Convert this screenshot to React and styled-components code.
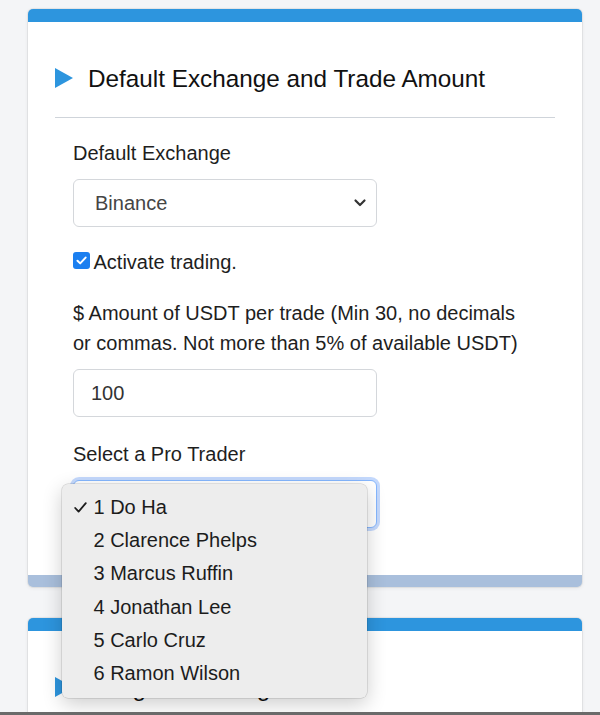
import React from 'react';
import styled, { createGlobalStyle } from 'styled-components';

const GlobalStyle = createGlobalStyle`
  html, body {
    margin: 0;
    padding: 0;
    background: #f4f5f7;
    font-family: "Liberation Sans", Arial, Helvetica, sans-serif;
    overflow: hidden;
  }
`;

const Page = styled.div`
  display: flex;
  flex-direction: column;
  height: 100vh;
`;

const Content = styled.main`
  flex: 1;
  overflow: hidden;
  padding: 9px 18px 0 28px;
  display: flex;
  flex-direction: column;
  gap: 31px;
`;

const WindowEdge = styled.div`
  height: 3px;
  background: #6a6a6a;
`;

const Card = styled.section`
  flex-shrink: 0;
  background: #ffffff;
  border-top: 13px solid #2d95de;
  border-bottom: ${props => (props.$footer ? '12.5px solid #a9bfdc' : 'none')};
  border-radius: 5px;
  box-shadow: 0 0 0 1px rgba(0, 0, 0, 0.05), 0 1px 4px rgba(0, 0, 0, 0.07);
`;

const CardBody = styled.div`
  padding: 42px 27px 47px;
`;

const Heading = styled.h2`
  display: flex;
  align-items: center;
  gap: 15px;
  margin: 0 0 23px;
  height: 30px;
  font-size: 24.3px;
  line-height: 30px;
  font-weight: 400;
  color: #111111;
`;

const Triangle = styled.span`
  width: 0;
  height: 0;
  margin-bottom: 3px;
  border-left: 18px solid #2d95de;
  border-top: 10px solid transparent;
  border-bottom: 10px solid transparent;
`;

const Divider = styled.div`
  border-top: 1px solid #cfd4da;
  margin-bottom: 20px;
`;

const Form = styled.div`
  padding: 0 18px;
`;

const Group = styled.div`
  margin-bottom: ${props => props.$gap ?? 20}px;
`;

const Label = styled.div`
  max-width: 465px;
  margin-bottom: 11px;
  font-size: 20px;
  line-height: 30px;
  color: #1e1e1e;
`;

const SelectWrap = styled.div`
  position: relative;
`;

const SelectBox = styled.div`
  box-sizing: border-box;
  width: 304px;
  height: 48px;
  display: flex;
  align-items: center;
  justify-content: space-between;
  padding: 0 6px 0 21px;
  background: #ffffff;
  border: 1px solid ${props => (props.$focused ? '#86b7fe' : '#d4d7db')};
  border-radius: 6px;
  box-shadow: ${props => (props.$focused ? '0 0 0 3px rgba(60, 130, 250, 0.3)' : 'none')};
  font-size: 20px;
  color: #454545;
`;

const TextInput = styled.input`
  box-sizing: border-box;
  display: block;
  width: 304px;
  height: 48px;
  padding: 0 0 0 17px;
  background: #ffffff;
  border: 1px solid #d4d7db;
  border-radius: 6px;
  font-family: inherit;
  font-size: 20px;
  color: #333333;
  outline: none;
`;

const CheckRow = styled.label`
  display: flex;
  align-items: center;
  gap: 4px;
  font-size: 20px;
  line-height: 30px;
  color: #1e1e1e;
`;

const CheckBox = styled.span`
  width: 16.5px;
  height: 16.5px;
  margin-bottom: 3px;
  display: flex;
  align-items: center;
  justify-content: center;
  background: #1b7ff0;
  border-radius: 3px;
`;

const Menu = styled.ul`
  position: absolute;
  top: 4px;
  left: -11.5px;
  z-index: 10;
  width: 305px;
  margin: 0;
  padding: 6.5px 0 8px;
  list-style: none;
  background: #ededed;
  border-radius: 6px;
  box-shadow: 0 0 0 0.5px rgba(0, 0, 0, 0.18), 0 6px 20px rgba(0, 0, 0, 0.2);
`;

const MenuItem = styled.li`
  display: flex;
  align-items: center;
  height: 33.3px;
  padding-left: 12.5px;
  font-size: 20px;
  color: #1c1c1c;
`;

const CheckSlot = styled.span`
  width: 19.5px;
  display: flex;
  align-items: center;
`;

const Chevron = () => (
  <svg width="20" height="12" viewBox="0 0 20 12">
    <path d="M5.5 3.5 L10 8 L14.5 3.5" fill="none" stroke="#333" strokeWidth="2.2" strokeLinecap="round" strokeLinejoin="round" />
  </svg>
);

const traders = ['1 Do Ha', '2 Clarence Phelps', '3 Marcus Ruffin', '4 Jonathan Lee', '5 Carlo Cruz', '6 Ramon Wilson'];

const App = () => {
  return (
    <>
      <GlobalStyle />
      <Page>
        <Content>
          <Card $footer>
            <CardBody>
              <Heading>
                <Triangle />
                Default Exchange and Trade Amount
              </Heading>
              <Divider />
              <Form>
                <Group>
                  <Label>Default Exchange</Label>
                  <SelectBox>
                    Binance
                    <Chevron />
                  </SelectBox>
                </Group>

                <Group $gap={21}>
                  <CheckRow>
                    <CheckBox>
                      <svg width="11" height="9" viewBox="0 0 11 9">
                        <path d="M1.5 4.8 L4.2 7.4 L9.6 1.6" fill="none" stroke="#fff" strokeWidth="2" strokeLinecap="round" strokeLinejoin="round" />
                      </svg>
                    </CheckBox>
                    Activate trading.
                  </CheckRow>
                </Group>

                <Group $gap={22}>
                  <Label>
                    $ Amount of USDT per trade (Min 30, no decimals or commas. Not more than 5% of available USDT)
                  </Label>
                  <TextInput readOnly value="100" />
                </Group>

                <Group $gap={0}>
                  <Label>Select a Pro Trader</Label>
                  <SelectWrap>
                    <SelectBox $focused>
                      1 Do Ha
                      <Chevron />
                    </SelectBox>
                    <Menu>
                      {traders.map((name, i) => (
                        <MenuItem key={name}>
                          <CheckSlot>
                            {i === 0 && (
                              <svg width="13" height="11" viewBox="0 0 13 11">
                                <path d="M1.2 6 L4.6 9.6 L11.8 1.2" fill="none" stroke="#1c1c1c" strokeWidth="1.8" strokeLinecap="round" strokeLinejoin="round" />
                              </svg>
                            )}
                          </CheckSlot>
                          {name}
                        </MenuItem>
                      ))}
                    </Menu>
                  </SelectWrap>
                </Group>
              </Form>
            </CardBody>
          </Card>

          <Card>
            <CardBody>
              <Heading>
                <Triangle />
                Telegram Settings
              </Heading>
              <Divider />
            </CardBody>
          </Card>
        </Content>
        <WindowEdge />
      </Page>
    </>
  );
};

export default App;
